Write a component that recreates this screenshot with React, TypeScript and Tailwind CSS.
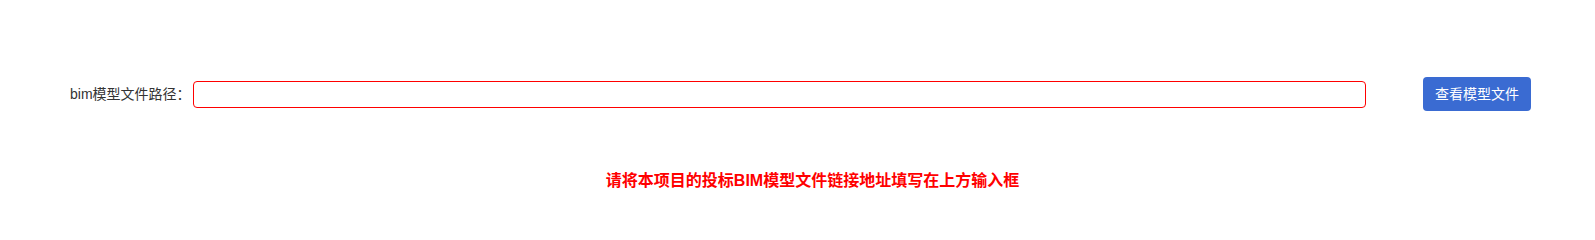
export default function App() {
  return (
    <div className="w-full h-[225px] bg-white font-['Liberation_Sans','Noto_Sans_CJK_SC',sans-serif]">
      {/* FORM ROW */}
      <div className="flex items-center pt-[77px] pl-[70px] pr-[64px]">
        <label className="text-[14px] leading-[20px] text-[#333333] whitespace-nowrap">
          bim模型文件路径：
        </label>

        <input
          type="text"
          className="ml-[2px] flex-1 h-[27px] border border-[#ff0000] rounded-[4px] px-2 text-[14px] outline-none"
        />

        <button className="ml-[57px] h-[34px] px-[12px] bg-[#3a6bd2] text-white text-[14px] rounded-[4px] whitespace-nowrap">
          查看模型文件
        </button>
      </div>

      {/* HINT */}
      <p className="mt-[59px] pl-[30px] text-center text-[16px] leading-[22px] font-bold text-[#ff0000]">
        请将本项目的投标BIM模型文件链接地址填写在上方输入框
      </p>
    </div>
  );
}
